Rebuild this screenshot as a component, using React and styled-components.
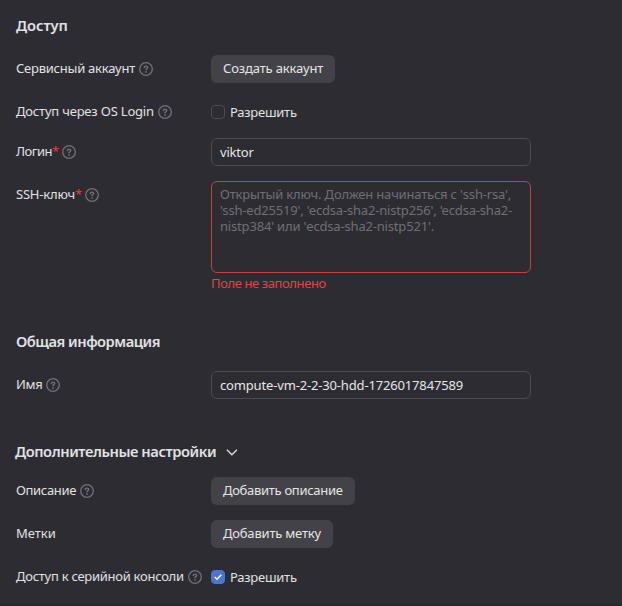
import React, { useState } from 'react';
import styled, { createGlobalStyle } from 'styled-components';

const GlobalStyle = createGlobalStyle`
  * { box-sizing: border-box; }
  body {
    margin: 0;
    background: #2d2c33;
    color: #e2e2e3;
    font: 13px/16px "Noto Sans", "Open Sans", sans-serif;
  }
`;

const Page = styled.main`
  min-height: 606px;
  padding: 15px 16px 0;
  background: #2d2c33;
  border-bottom: 2px solid #29272f;
`;

const Section = styled.section`
  margin-bottom: ${(p) => p.$after || 0}px;
`;

const Heading = styled.h2`
  display: flex;
  align-items: center;
  gap: ${(p) => p.$gap || 0}px;
  height: 20px;
  margin: 0 0 ${(p) => p.$after}px ${(p) => p.$shift || 0}px;
  font-size: 14.7px;
  line-height: 20px;
  font-weight: 600;
  white-space: nowrap;
`;

const Row = styled.div`
  display: grid;
  grid-template-columns: 195px 320px;
  align-items: start;
  margin-bottom: ${(p) => p.$after ?? 15}px;
`;

const Label = styled.label`
  display: flex;
  align-items: center;
  height: 28px;
  white-space: nowrap;
`;

const Text = styled.span`
  letter-spacing: ${(p) => p.$track || 0}px;
`;

const LabelText = styled(Text)`
  padding-bottom: 2px;
`;

const Required = styled.span`
  width: 6px;
  padding-bottom: 2px;
  color: #d9423f;
`;

const HelpIcon = styled.svg`
  width: 14px;
  height: 14px;
  margin-left: 4px;
  flex: none;
`;

const Button = styled.button`
  height: 28px;
  width: ${(p) => p.$width}px;
  padding: 0 0 2px 12px;
  border: 0;
  border-radius: 6px;
  background: #434248;
  color: #e6e6e7;
  font: inherit;
  letter-spacing: ${(p) => p.$track || 0}px;
  text-align: left;
  white-space: nowrap;
`;

const field = `
  display: block;
  width: 320px;
  margin: 0;
  border-radius: 6px;
  background: transparent;
  color: #e6e6e7;
  font: inherit;
  outline: none;
`;

const Input = styled.input`
  ${field}
  height: 28px;
  padding: 0 8px 1px;
  border: 1px solid #4d4c52;
  letter-spacing: ${(p) => p.$track || 0}px;
`;

const TextArea = styled.textarea`
  ${field}
  height: 92px;
  padding: 4px 8px;
  border: 1px solid #c6413e;
  resize: none;
  overflow: hidden;
  letter-spacing: ${(p) => p.$track || 0}px;
  &::placeholder { color: #706f74; opacity: 1; }
`;

const ErrorText = styled.div`
  margin-top: 2px;
  color: #e04542;
  line-height: 16px;
  letter-spacing: ${(p) => p.$track || 0}px;
`;

const CheckLabel = styled.label`
  display: flex;
  align-items: center;
  gap: 5px;
  height: 28px;
`;

const CheckBox = styled.button`
  display: grid;
  place-items: center;
  width: 14px;
  height: 14px;
  padding: 0;
  border: 1px solid ${(p) => (p.$on ? '#4b74d8' : '#4d4c52')};
  border-radius: 4px;
  background: ${(p) => (p.$on ? '#4b74d8' : 'transparent')};
`;

function Help() {
  return (
    <HelpIcon viewBox="0 0 14 14" fill="none" stroke="#727177" aria-hidden="true">
      <circle cx="7" cy="7" r="6.3" strokeWidth="1.3" />
      <path d="M5.3 5.6C5.3 4.6 6 4.1 7 4.1s1.7.6 1.7 1.45C8.7 6.6 7 6.65 7 7.8" strokeWidth="1.4" strokeLinecap="round" />
      <circle cx="7" cy="9.9" r=".85" fill="#727177" stroke="none" />
    </HelpIcon>
  );
}

function FormRow({ label, track, required, help = true, after, children }) {
  return (
    <Row $after={after}>
      <Label>
        <LabelText $track={track}>{label}</LabelText>
        {required && <Required>*</Required>}
        {help && <Help />}
      </Label>
      <div>{children}</div>
    </Row>
  );
}

function Allow({ initial, name }) {
  const [on, setOn] = useState(initial);
  return (
    <CheckLabel>
      <CheckBox type="button" role="checkbox" aria-checked={on} aria-label={name} $on={on} onClick={() => setOn(!on)}>
        {on && (
          <svg width="8" height="8" viewBox="0 0 8 8" fill="none" stroke="#fff" strokeWidth="1.4">
            <path d="M.7 4.1 3 6.2 7.3 1.8" />
          </svg>
        )}
      </CheckBox>
      <Text $track={-0.25}>Разрешить</Text>
    </CheckLabel>
  );
}

export default function App() {
  return (
    <>
      <GlobalStyle />
      <Page>
        <Section $after={40}>
          <Heading $after={20}><Text $track={-0.05}>Доступ</Text></Heading>
          <FormRow label="Сервисный аккаунт" track={-0.24}>
            <Button $width={124} $track={-0.15}>Создать аккаунт</Button>
          </FormRow>
          <FormRow label="Доступ через OS Login" track={-0.19} after={12}>
            <Allow name="OS Login" initial={false} />
          </FormRow>
          <FormRow label="Логин" track={-0.52} required>
            <Input defaultValue="viktor" $track={-0.2} />
          </FormRow>
          <FormRow label="SSH-ключ" track={-0.2} required after={0}>
            <TextArea $track={-0.18} placeholder="Открытый ключ. Должен начинаться с 'ssh-rsa', 'ssh-ed25519', 'ecdsa-sha2-nistp256', 'ecdsa-sha2-nistp384' или 'ecdsa-sha2-nistp521'." />
            <ErrorText $track={-0.4}>Поле не заполнено</ErrorText>
          </FormRow>
        </Section>
        <Section $after={42}>
          <Heading $after={20}><Text $track={-0.5}>Общая информация</Text></Heading>
          <FormRow label="Имя" track={-0.3} after={0}>
            <Input $track={-0.16} defaultValue="compute-vm-2-2-30-hdd-1726017847589" />
          </FormRow>
        </Section>
        <Section>
          <Heading $after={16} $shift={-1} $gap={9}>
            <Text $track={-0.43}>Дополнительные настройки</Text>
            <svg width="14" height="14" viewBox="0 0 14 14" fill="none" stroke="#dededf" strokeWidth="1.3">
              <path d="m1.9 5.8 5 5 5-5" />
            </svg>
          </Heading>
          <FormRow label="Описание" track={-0.33}>
            <Button $width={144} $track={-0.3}>Добавить описание</Button>
          </FormRow>
          <FormRow label="Метки" help={false}>
            <Button $width={122} $track={-0.2}>Добавить метку</Button>
          </FormRow>
          <FormRow label="Доступ к серийной консоли" track={-0.27} after={0}>
            <Allow name="Доступ к серийной консоли" initial />
          </FormRow>
        </Section>
      </Page>
    </>
  );
}
